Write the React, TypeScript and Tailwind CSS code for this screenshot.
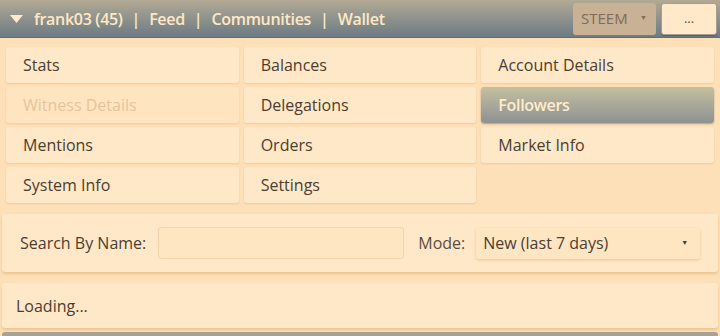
import { useState } from 'react';

const menu = [
  ['Stats', 'Balances', 'Account Details'],
  ['Witness Details', 'Delegations', 'Followers'],
  ['Mentions', 'Orders', 'Market Info'],
  ['System Info', 'Settings', ''],
];

export default function App() {
  const [active] = useState('Followers');

  return (
    <div className="w-[720px] h-[336px] overflow-hidden bg-[#fee0b8] text-[#4a3e33] font-['Open_Sans',sans-serif]">
      {/* Header */}
      <div className="h-[38px] flex items-center bg-gradient-to-b from-[#b3a994] to-[#6c7b84] border-b border-[#5f6d74] pl-[10px] pr-[3px]">
        <svg width="13" height="8" viewBox="0 0 13 8" className="mr-[11px] mt-[1px] shrink-0">
          <path d="M0 0 L13 0 L6.5 8 Z" fill="#ffe9c9" />
        </svg>
        <div className="flex items-center gap-[9px] text-[16px] font-semibold text-[#ffe8c4] tracking-[-0.3px] whitespace-nowrap">
          <span>frank03 (45)</span>
          <span>|</span>
          <span>Feed</span>
          <span>|</span>
          <span>Communities</span>
          <span>|</span>
          <span>Wallet</span>
        </div>
        <div className="ml-auto flex items-center gap-[5px]">
          <div className="w-[83px] h-[32px] rounded-[3px] bg-[#c8b194] flex items-center pl-[8px] pr-[9px] text-[15px] text-[#7d6c5a]">
            <span>STEEM</span>
            <span className="ml-auto text-[7px]">▼</span>
          </div>
          <div className="w-[56px] h-[32px] rounded-[3px] bg-[#ffe9c9] border border-[#a89f93] shadow-[0_1px_1px_rgba(0,0,0,0.25)] flex items-center justify-center text-[13px] text-[#5a4d40]">
            ...
          </div>
        </div>
      </div>

      {/* Menu grid */}
      <div className="grid grid-cols-3 gap-x-[5px] gap-y-[4px] px-[6px] pt-[9px] pb-[6px]">
        {menu.flat().map((label, i) =>
          label === '' ? (
            <div key={i} />
          ) : label === active ? (
            <div
              key={i}
              className="h-[36px] rounded-[3px] bg-gradient-to-b from-[#c6c09f] to-[#8d9192] shadow-[0_1px_2px_rgba(0,0,0,0.3)] flex items-center pl-[17px] text-[16px] font-semibold text-[#ffeccc] tracking-[-0.3px]"
            >
              {label}
            </div>
          ) : (
            <div
              key={i}
              className={
                'h-[36px] rounded-[3px] shadow-[0_1px_2px_rgba(214,160,100,0.35)] flex items-center pl-[17px] text-[16px] ' +
                (label === 'Witness Details' ? 'text-[#e4c49f] bg-[#ffe4c0]' : 'text-[#4a3e33] bg-[#ffe8c7]')
              }
            >
              {label}
            </div>
          )
        )}
      </div>

      {/* Search */}
      <div className="mt-[5px] mx-[2px] h-[58px] rounded-[3px] bg-[#ffe8c7] shadow-[0_2px_3px_rgba(214,160,100,0.45)] flex items-center pl-[18px] pr-[18px] text-[16px] whitespace-nowrap">
        <span className="shrink-0">Search By Name:</span>
        <div className="ml-[12px] shrink-0 w-[246px] h-[32px] rounded-[3px] border border-[#f4d3ac] bg-[#ffe6c3]" />
        <span className="ml-[14px] shrink-0 text-[#5a4d40]">Mode:</span>
        <div className="ml-[11px] shrink-0 w-[224px] h-[31px] rounded-[3px] bg-[#ffe6c3] shadow-[0_1px_3px_rgba(200,140,80,0.4)] flex items-center pl-[7px] pr-[12px]">
          <span>New (last 7 days)</span>
          <span className="ml-auto text-[7px]">▼</span>
        </div>
      </div>

      {/* Loading */}
      <div className="mt-[11px] mx-[2px] h-[45px] rounded-[3px] bg-[#ffe8c7] shadow-[0_2px_3px_rgba(214,160,100,0.45)] flex items-center pl-[14px] text-[16px]">
        Loading...
      </div>

      <div className="mt-[4px] mx-[2px] h-[10px] rounded-t-[3px] bg-[#a9a196]" />
    </div>
  );
}
